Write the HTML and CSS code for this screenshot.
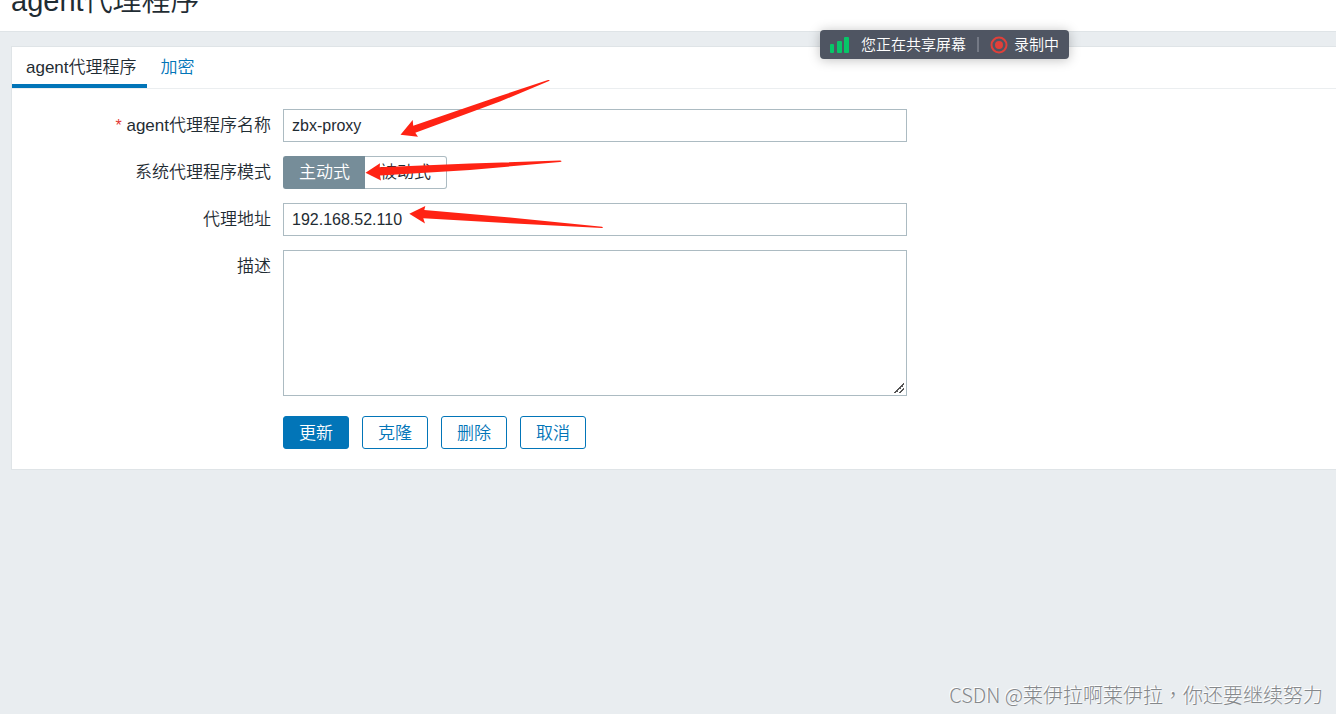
FILE: index.html
```html
<!DOCTYPE html>
<html lang="zh-CN">
<head>
<meta charset="utf-8">
<title>agent代理程序</title>
<link rel="stylesheet" href="styles.css">
</head>
<body>
<header class="page-header"><h1 class="page-title">agent代理程序</h1></header>
<main class="panel">
  <nav class="tabs">
    <a class="tab tab-active" href="#proxy">agent代理程序</a>
    <a class="tab" href="#encryption">加密</a>
  </nav>
  <form class="form" id="proxy">
    <label class="label" for="name"><span class="required">*</span> agent代理程序名称</label>
    <input class="field" id="name" type="text" value="zbx-proxy">

    <span class="label" id="mode-label">系统代理程序模式</span>
    <div class="toggle" role="radiogroup" aria-labelledby="mode-label">
      <input class="toggle-input" type="radio" name="mode" id="active" checked>
      <label class="toggle-option" for="active">主动式</label>
      <input class="toggle-input" type="radio" name="mode" id="passive">
      <label class="toggle-option" for="passive">被动式</label>
    </div>

    <label class="label" for="address">代理地址</label>
    <input class="field" id="address" type="text" value="192.168.52.110">

    <label class="label" for="description">描述</label>
    <textarea class="field field-area" id="description"></textarea>

    <div class="actions">
      <button class="button button-primary" type="submit">更新</button>
      <button class="button" type="button">克隆</button>
      <button class="button" type="button">删除</button>
      <button class="button" type="button">取消</button>
    </div>
  </form>
</main>

<svg class="arrows" width="620" height="240" viewBox="0 0 620 240" aria-hidden="true">
  <path d="M400.5 134.7 412.7 120 413.2 125.8 500 96 548 80Q551 79.500 549 81L500 101.500 415.300 132.800 418 136.700Z"/>
  <path d="M365.500 172.700 380 163.300 379.700 167.300 470 163.500 560 160.500Q563 161.200 560 162L470 170 380 175.400 381 180.400Z"/>
  <path d="M409.300 213.700 425.300 206 424.300 210 510 217.500 602 226.700Q604 227.500 602 228L510 223.300 423.300 218.300 425 223.500Z"/>
</svg>

<aside class="share-bar">
  <svg class="signal" width="20" height="16" viewBox="0 0 20 16" aria-hidden="true">
    <rect x="0" y="7" width="4" height="9" rx="1"/><rect x="7" y="4" width="5" height="12" rx="1"/><rect x="14" y="0" width="5" height="16" rx="1"/>
  </svg>
  <span class="share-text">您正在共享屏幕</span>
  <span class="divider"></span>
  <svg class="record" width="18" height="18" viewBox="0 0 18 18" aria-hidden="true">
    <circle cx="9" cy="9" r="7.500" fill="none" stroke="#e0403a" stroke-width="2"/><circle cx="9" cy="9" r="4" fill="#e0403a"/>
  </svg>
  <span>录制中</span>
</aside>
<p class="watermark" lang="zh-Hant">CSDN @莱伊拉啊莱伊拉，你还要继续努力</p>
</body>
</html>
```

FILE: styles.css
```css
* { box-sizing: border-box; }

body {
  margin: 0;
  min-height: 100vh;
  position: relative;
  overflow: hidden;
  background: #e9edf0;
  color: #1f2c33;
  font: 350 17px/20px "Liberation Sans", "Noto Sans CJK SC", sans-serif;
}

.page-header {
  display: flex;
  align-items: flex-end;
  height: 32px;
  padding: 0 11px 14px;
  background: #fff;
  border-bottom: 1px solid #dfe4e7;
}

.page-title { margin: 0; font-size: 29px; font-weight: 350; line-height: 32px; }

.panel {
  margin: 14px 0 0 11px;
  background: #fff;
  border: 1px solid #dfe4e7;
  border-right: 0;
}

.tabs { display: flex; border-bottom: 1px solid #ebeef0; }

.tab {
  padding: 11px 10px 6px 14px;
  border-bottom: 4px solid transparent;
  color: #0275b8;
  text-decoration: none;
}

.tab-active { color: #1f2c33; border-color: #0275b8; }

.form {
  display: grid;
  grid-template-columns: 259px minmax(0, 624px);
  gap: 14px 12px;
  padding: 20px 0;
}

.label { padding-top: 7px; text-align: right; }
.required { color: #e33734; font-size: 16px; }

.field {
  width: 100%;
  height: 33px;
  margin: 0;
  padding: 0 8px;
  border: 1px solid #acbbc2;
  border-radius: 0;
  outline: 0;
  background: #fff;
  color: #1f2c33;
  font: inherit;
  font-size: 16px;
}

.field-area { display: block; height: 146px; padding: 6px 8px; resize: both; }

.field-area::-webkit-resizer {
  background: linear-gradient(135deg, transparent 48%, #555 48%, #555 60%, transparent 60%, transparent 72%, #555 72%, #555 84%, transparent 84%) 3px 3px / 10px 10px no-repeat;
}

.toggle { position: relative; display: flex; height: 33px; }
.toggle-input { position: absolute; opacity: 0; }

.toggle-option {
  padding: 6px 15px 5px;
  border: 1px solid #acbbc2;
  border-left: 0;
  border-radius: 0 3px 3px 0;
  cursor: pointer;
}

.toggle-option:first-of-type {
  border-left: 1px solid #acbbc2;
  border-right: 0;
  border-radius: 3px 0 0 3px;
}

.toggle-input:checked + .toggle-option { background: #768d99; border-color: #768d99; color: #fff; }

.actions { grid-column: 2; display: flex; gap: 13px; padding-top: 6px; }

.button {
  height: 33px;
  padding: 2px 15px 0;
  border: 1px solid #0275b8;
  border-radius: 3px;
  background: #fff;
  color: #0275b8;
  font: inherit;
}

.button-primary { background: #0275b8; color: #fff; }

.arrows { position: absolute; top: 0; left: 0; fill: #ff2314; pointer-events: none; }

.share-bar {
  position: absolute;
  top: 30px;
  right: 267px;
  display: flex;
  align-items: center;
  height: 29px;
  padding: 0 10px;
  border-radius: 4px;
  background: #4f5562;
  box-shadow: 0 1px 12px rgba(0, 0, 0, .25);
  color: #fff;
  font-size: 15px;
}

.signal { margin-right: 11px; fill: #07c668; }
.divider { width: 2px; height: 15px; margin: 0 11px; background: #747985; }
.record { margin-right: 6px; }

.watermark {
  position: absolute;
  right: 13px;
  bottom: 5px;
  margin: 0;
  color: #85888b;
  font: 300 20px/28px "Noto Sans CJK TC", sans-serif;
  text-shadow: -1px -1px 0 #fff;
}
```
